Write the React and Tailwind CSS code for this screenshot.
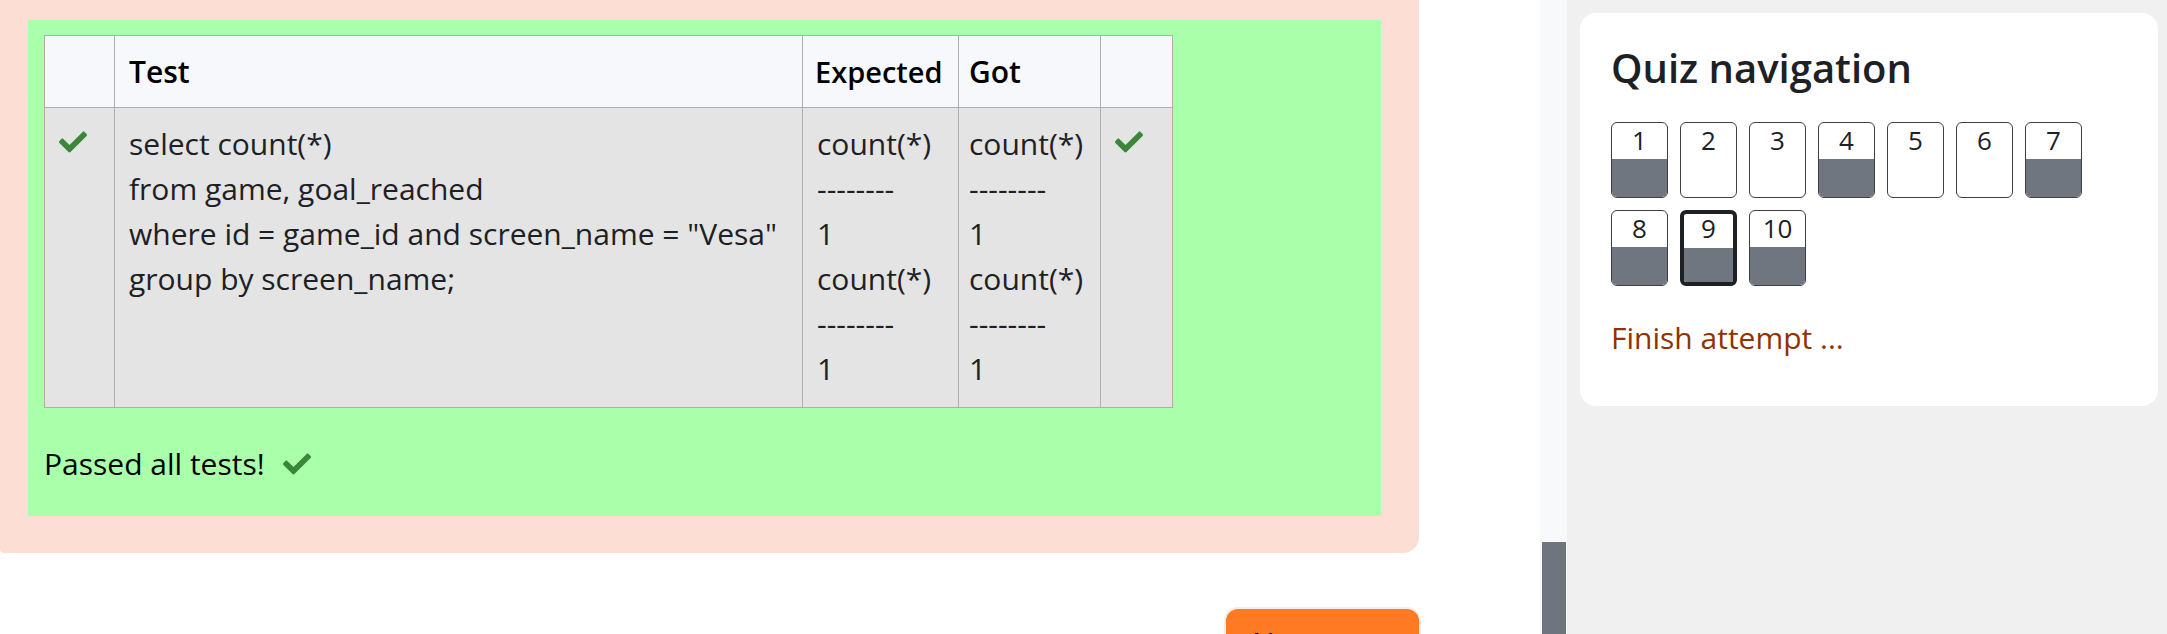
import React from 'react'
import { FaCheck } from 'react-icons/fa'

const Check = ({ size = 28 }) => <FaCheck size={size} color="#3a873a" />

const navItems = [
  { n: 1, done: true },
  { n: 2, done: false },
  { n: 3, done: false },
  { n: 4, done: true },
  { n: 5, done: false },
  { n: 6, done: false },
  { n: 7, done: true },
  { n: 8, done: true },
  { n: 9, done: true, current: true },
  { n: 10, done: true },
]

const expected = ['count(*)', '--------', '1', 'count(*)', '--------', '1']
const query = [
  'select count(*)',
  'from game, goal_reached',
  'where id = game_id and screen_name = "Vesa"',
  'group by screen_name;',
]

const NavButton = ({ item }) => (
  <div
    className={
      'w-[57px] h-[76px] rounded-[6px] overflow-hidden flex flex-col bg-white ' +
      (item.current ? 'border-[4px] border-[#1d2125]' : 'border border-[#3a3f45]')
    }
  >
    <div
      className={
        'flex-1 flex items-start justify-center text-[26px] leading-[34px] text-[#1d2125] ' +
        (item.current ? '-mt-[3px]' : '')
      }
    >
      {item.n}
    </div>
    {item.done && <div className={item.current ? 'h-[34px] bg-[#6f767f]' : 'h-[38px] bg-[#6f767f]'} />}
  </div>
)

export default function App() {
  return (
    <div className="flex w-full h-[634px] overflow-hidden bg-white font-['Open_Sans',sans-serif] text-[#1d2125]">
      {/* main column */}
      <div className="w-[1540px] shrink-0 flex flex-col">
        <div className="w-[1419px] h-[553px] shrink-0 bg-[#fcded4] rounded-br-[16px] rounded-bl-[4px] pt-[20px] pl-[28px]">
          <div className="w-[1353px] h-[496px] bg-[#aaffaa] pt-[15px] pl-[16px]">
            <table className="table-fixed w-[1129px] border-collapse text-[30px] leading-[45px]">
              <thead>
                <tr className="bg-[#f7f8fc]">
                  <th className="w-[70px] h-[72px] border border-[#aeaeae]" />
                  <th className="w-[688px] border border-[#aeaeae] text-left font-semibold px-[14px] text-black">Test</th>
                  <th className="w-[156px] border border-[#aeaeae] text-left font-semibold text-[29px] pl-[12px] pr-0 text-black whitespace-nowrap">Expected</th>
                  <th className="w-[142px] border border-[#aeaeae] text-left font-semibold px-[10px] text-black">Got</th>
                  <th className="w-[72px] border border-[#aeaeae]" />
                </tr>
              </thead>
              <tbody>
                <tr className="bg-[#e4e4e4] align-top">
                  <td className="h-[300px] border border-[#aeaeae] px-[14px] pt-[20px]">
                    <Check />
                  </td>
                  <td className="border border-[#aeaeae] px-[14px] py-[13px] whitespace-nowrap">
                    {query.map((l, i) => (
                      <div key={i}>{l}</div>
                    ))}
                  </td>
                  <td className="border border-[#aeaeae] pl-[14px] pr-0 py-[13px] whitespace-nowrap">
                    {expected.map((l, i) => (
                      <div key={i}>{l}</div>
                    ))}
                  </td>
                  <td className="border border-[#aeaeae] pl-[10px] pr-0 py-[13px] whitespace-nowrap">
                    {expected.map((l, i) => (
                      <div key={i}>{l}</div>
                    ))}
                  </td>
                  <td className="border border-[#aeaeae] px-[14px] pt-[20px]">
                    <Check />
                  </td>
                </tr>
              </tbody>
            </table>
            <div className="mt-[33px] flex items-center gap-[18px] text-[30px] leading-[45px] text-black">
              <span>Passed all tests!</span>
              <Check />
            </div>
          </div>
        </div>
        <div className="flex justify-end w-[1419px] pt-[56px]">
          <button className="w-[193px] h-[60px] shrink-0 bg-[#ff7a22] rounded-[12px] shadow-[0_0_0_2px_#eeeeee] text-[30px] text-left pl-[26px] pt-[6px] leading-[45px] text-black whitespace-nowrap">
            Next page
          </button>
        </div>
      </div>

      {/* scrollbar */}
      <div className="w-[27px] shrink-0 bg-[#f8f9fa] flex flex-col justify-end pl-[2px] pr-[1px]">
        <div className="h-[92px] bg-[#6f757e]" />
      </div>

      {/* right drawer */}
      <div className="flex-1 bg-[#f0f0f0] pt-[13px] pl-[13px]">
        <div className="w-[578px] h-[393px] bg-white rounded-[16px] pt-[27px] px-[31px]">
          <h2 className="text-[40px] leading-[56px] font-semibold text-[#1d2125]">Quiz navigation</h2>
          <div className="mt-[26px] flex flex-wrap gap-[12px] w-[500px]">
            {navItems.map(item => (
              <NavButton key={item.n} item={item} />
            ))}
          </div>
          <a href="#" className="block mt-[29px] text-[30px] leading-[45px] text-[#8f3200]">
            Finish attempt ...
          </a>
        </div>
      </div>
    </div>
  )
}
